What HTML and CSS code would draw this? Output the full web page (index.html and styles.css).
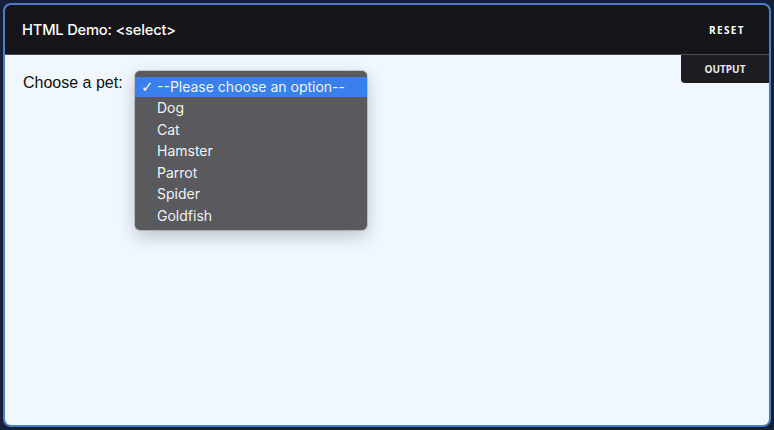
FILE: index.html
```html
<!DOCTYPE html>
<html>
<head>
<meta charset="utf-8">
<link rel="stylesheet" href="styles.css">
</head>
<body>
<div class="frame">
  <header class="bar">
    <h1 class="title">HTML Demo: &lt;select&gt;</h1>
    <button class="reset">RESET</button>
  </header>
  <main class="output">
    <div class="tab">OUTPUT</div>
    <div class="row">
      <label class="label">Choose a pet:</label>
      <div class="menu">
        <div class="opt sel"><span class="check">✓</span>--Please choose an option--</div>
        <div class="opt">Dog</div>
        <div class="opt">Cat</div>
        <div class="opt">Hamster</div>
        <div class="opt">Parrot</div>
        <div class="opt">Spider</div>
        <div class="opt">Goldfish</div>
      </div>
    </div>
  </main>
</div>
</body>
</html>
```

FILE: styles.css
```css
html, body {
  margin: 0;
  padding: 0;
  background: #14203a;
  height: 100%;
}
.frame {
  box-sizing: border-box;
  margin: 3px;
  height: 424px;
  border: 2px solid #4f7cc6;
  border-radius: 8px;
  overflow: hidden;
  display: flex;
  flex-direction: column;
  background: #f0f7fe;
  box-shadow: inset 0 0 0 1px #1c2a48;
}
.bar {
  height: 49px;
  flex: none;
  background: #15151a;
  border-bottom: 1px solid #4a4a4f;
  display: flex;
  align-items: center;
  justify-content: space-between;
  padding: 0 24px 0 17px;
}
.title {
  margin: 0;
  font-family: Inter, "Open Sans", sans-serif;
  font-weight: 500;
  font-size: 14.7px;
  color: #ffffff;
  letter-spacing: -0.2px;
}
.reset {
  background: none;
  border: 0;
  padding: 0;
  color: #ffffff;
  font-family: "Open Sans", sans-serif;
  font-weight: 700;
  font-size: 10px;
  letter-spacing: 1.4px;
}
.output {
  flex: 1;
  position: relative;
  background: #f0f7fe;
}
.tab {
  position: absolute;
  top: 0;
  right: 0;
  width: 88px;
  height: 28px;
  background: #1c1c21;
  border-bottom-left-radius: 4px;
  color: #e8e8ec;
  font-family: "Open Sans", sans-serif;
  font-weight: 700;
  font-size: 10px;
  display: flex;
  align-items: center;
  justify-content: center;
}
.row {
  display: flex;
  align-items: flex-start;
  padding: 16px 0 0 18px;
}
.label {
  font-family: "Liberation Sans", Arial, sans-serif;
  font-size: 16px;
  color: #111;
  margin-top: 3px;
  width: 112px;
}
.menu {
  width: 232px;
  box-sizing: border-box;
  padding: 6px 0 4px;
  background: #59595e;
  border-radius: 5px;
  box-shadow: 0 6px 18px rgba(0,0,0,0.22), 0 0 0 1px rgba(0,0,0,0.15);
  font-family: Inter, "Liberation Sans", sans-serif;
  font-size: 14px;
  color: #f2f2f4;
}
.opt {
  height: 21.5px;
  line-height: 21.5px;
  padding-left: 22px;
  position: relative;
}
.opt.sel {
  background: #3a80ec;
  height: 20px;
  line-height: 20px;
}
.check {
  position: absolute;
  left: 6px;
  top: 0;
  font-family: "DejaVu Sans", sans-serif;
  font-size: 15px;
}
```
